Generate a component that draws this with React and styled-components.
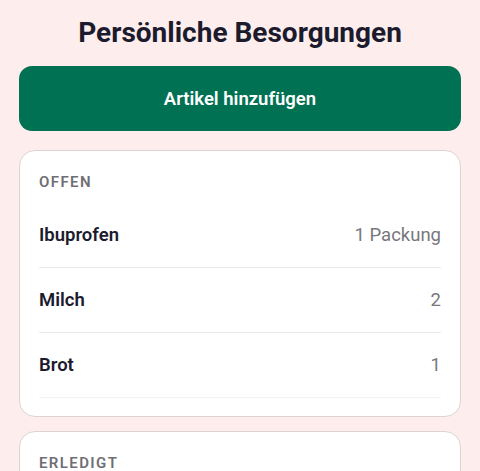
import React from "react";
import styled, { createGlobalStyle } from "styled-components";

const GlobalStyle = createGlobalStyle`
  html, body {
    margin: 0;
    padding: 0;
    background: #fdeeed;
  }
  body {
    font-family: Roboto, "Noto Sans", "Liberation Sans", sans-serif;
    -webkit-font-smoothing: antialiased;
  }
  * { box-sizing: border-box; }
`;

const Page = styled.div`
  display: flex;
  flex-direction: column;
  padding: 17px 19px 40px;
  min-height: 471px;
  background: #fdeeed;
`;

const Title = styled.h1`
  margin: 0 0 17px;
  font-size: 28px;
  line-height: 32px;
  font-weight: 700;
  color: #1c1b2e;
  text-align: center;
`;

const AddButton = styled.button`
  height: 65px;
  width: 100%;
  border: none;
  border-radius: 13px;
  background: #007152;
  color: #ffffff;
  font-family: inherit;
  font-size: 18.5px;
  font-weight: 600;
  cursor: pointer;
  margin-bottom: 19px;
`;

const Sections = styled.div`
  display: flex;
  flex-direction: column;
  gap: 14px;
`;

const Card = styled.section`
  background: #ffffff;
  border: 1px solid #ddd3d3;
  border-radius: 16px;
  padding: 20px 19px 18px;
`;

const SectionLabel = styled.h2`
  margin: 0 0 10px;
  font-size: 15px;
  line-height: 22px;
  font-weight: 600;
  letter-spacing: 1.4px;
  text-transform: uppercase;
  color: #6f6e74;
`;

const List = styled.ul`
  list-style: none;
  margin: 0;
  padding: 0;
`;

const Row = styled.li`
  display: flex;
  align-items: center;
  justify-content: space-between;
  height: 65px;
  border-bottom: 1px solid ${(p) => (p.$last ? "#f3f1f1" : "#e9e7e8")};
`;

const ItemName = styled.span`
  font-size: 18.5px;
  font-weight: 600;
  color: #1c1b2e;
`;

const Quantity = styled.span`
  font-size: 18.5px;
  font-weight: 400;
  color: #78777d;
`;

const open = [
  { name: "Ibuprofen", qty: "1 Packung" },
  { name: "Milch", qty: "2" },
  { name: "Brot", qty: "1" },
];

export default function App() {
  return (
    <>
      <GlobalStyle />
      <Page>
        <Title>Persönliche Besorgungen</Title>
        <AddButton>Artikel hinzufügen</AddButton>
        <Sections>
          <Card>
            <SectionLabel>Offen</SectionLabel>
            <List>
              {open.map((it, i) => (
                <Row key={it.name} $last={i === open.length - 1}>
                  <ItemName>{it.name}</ItemName>
                  <Quantity>{it.qty}</Quantity>
                </Row>
              ))}
            </List>
          </Card>
          <Card>
            <SectionLabel>Erledigt</SectionLabel>
          </Card>
        </Sections>
      </Page>
    </>
  );
}
